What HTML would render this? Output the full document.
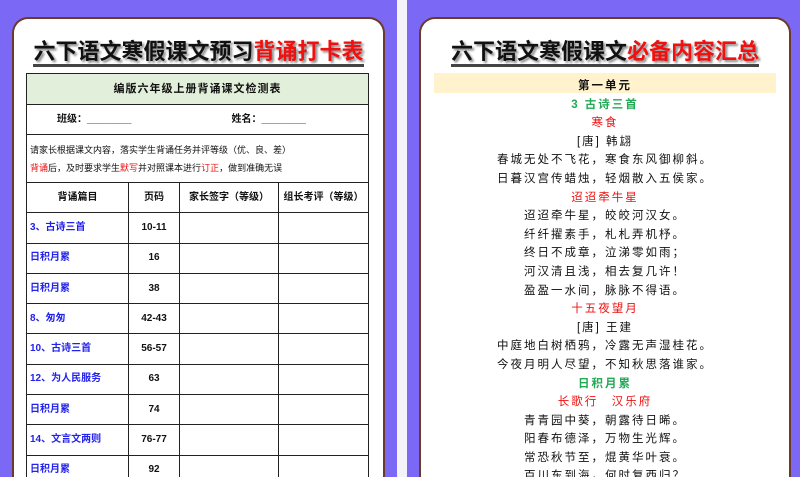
<!DOCTYPE html>
<html style="width:800px;height:477px;overflow:hidden"><head><meta charset="utf-8"><style>
*{margin:0;padding:0;box-sizing:border-box}
body{width:800px;height:477px;overflow:hidden;background:#7B68F5;position:relative;font-family:"Liberation Sans","Noto Sans CJK SC",sans-serif}
.strip{position:absolute;left:397px;top:0;width:10px;height:477px;background:#F3F3FA}
.card{position:absolute;top:17px;height:460px;overflow:hidden;background:#fff;border:2px solid #6B3A2A;border-bottom:none;border-radius:16px 16px 0 0}
.title{position:absolute;left:0;right:0;top:19px;text-align:center;font-size:22px;line-height:28px;font-weight:bold;color:#111;text-shadow:2px 2px 2px #888;white-space:nowrap}
.title span.u{border-bottom:3px solid #444}
.red{color:#F01010}
table{position:absolute;left:12px;top:54px;border-collapse:collapse;width:343px}
td{border:1.5px solid #222;font-size:10px;line-height:12px;text-align:center;vertical-align:middle;height:30.3px;color:#111;font-weight:bold}
.blue{color:#2222EE;text-align:left;padding-left:3px;font-weight:bold}
.lines{position:absolute;left:0;right:0;top:58px;text-align:center}
.lines div{height:18.6px;line-height:18.6px;font-size:11.5px;letter-spacing:2px;color:#111}
.lines .red{color:#F01010}
.lines .g{color:#22AA55;font-weight:bold}
</style></head><body>
<div class="strip"></div>
<div class="card" style="left:12px;width:373px">
<div class="title"><span class="u">六下语文寒假课文预习<span class="red">背诵打卡表</span></span></div>
<table>
<tr><td colspan="4" style="background:#E2EFDA;height:31px;font-size:11px;letter-spacing:1px">编版六年级上册背诵课文检测表</td></tr>
<tr><td colspan="4" style="height:30px;font-size:10px;text-align:left;padding-left:30px">班级：________<span style="display:inline-block;width:100px"></span>姓名：________</td></tr>
<tr><td colspan="4" style="height:48px;text-align:left;padding-left:3px;line-height:18px;font-size:9px;font-weight:normal">请家长根据课文内容，落实学生背诵任务并评等级（优、良、差）<br><span class="red">背诵</span>后，及时要求学生<span class="red">默写</span>并对照课本进行<span class="red">订正</span>，做到准确无误</td></tr>
<tr><td style="width:102px">背诵篇目</td><td style="width:51px">页码</td><td style="width:99px">家长签字（等级）</td><td>组长考评（等级）</td></tr>
<tr><td class="blue">3、古诗三首</td><td>10-11</td><td></td><td></td></tr>
<tr><td class="blue">日积月累</td><td>16</td><td></td><td></td></tr>
<tr><td class="blue">日积月累</td><td>38</td><td></td><td></td></tr>
<tr><td class="blue">8、匆匆</td><td>42-43</td><td></td><td></td></tr>
<tr><td class="blue">10、古诗三首</td><td>56-57</td><td></td><td></td></tr>
<tr><td class="blue">12、为人民服务</td><td>63</td><td></td><td></td></tr>
<tr><td class="blue">日积月累</td><td>74</td><td></td><td></td></tr>
<tr><td class="blue">14、文言文两则</td><td>76-77</td><td></td><td></td></tr>
<tr><td class="blue">日积月累</td><td>92</td><td></td><td></td></tr>
</table>
</div>
<div class="card" style="left:419px;width:372px">
<div class="title"><span class="u">六下语文寒假课文<span class="red">必备内容汇总</span></span></div>
<div style="position:absolute;left:13px;top:54px;width:342px;height:20px;background:#FFF2CC"></div>
<div class="lines">
<div style="font-weight:bold">第一单元</div>
<div class="g">3 古诗三首</div>
<div class="red">寒食</div>
<div>[唐] 韩翃</div>
<div>春城无处不飞花，寒食东风御柳斜。</div>
<div>日暮汉宫传蜡烛，轻烟散入五侯家。</div>
<div class="red">迢迢牵牛星</div>
<div>迢迢牵牛星，皎皎河汉女。</div>
<div>纤纤擢素手，札札弄机杼。</div>
<div>终日不成章，泣涕零如雨；</div>
<div>河汉清且浅，相去复几许！</div>
<div>盈盈一水间，脉脉不得语。</div>
<div class="red">十五夜望月</div>
<div>[唐] 王建</div>
<div>中庭地白树栖鸦，冷露无声湿桂花。</div>
<div>今夜月明人尽望，不知秋思落谁家。</div>
<div class="g">日积月累</div>
<div class="red">长歌行　汉乐府</div>
<div>青青园中葵，朝露待日晞。</div>
<div>阳春布德泽，万物生光辉。</div>
<div>常恐秋节至，焜黄华叶衰。</div>
<div>百川东到海，何时复西归？</div>
</div>
</div>
</body></html>
